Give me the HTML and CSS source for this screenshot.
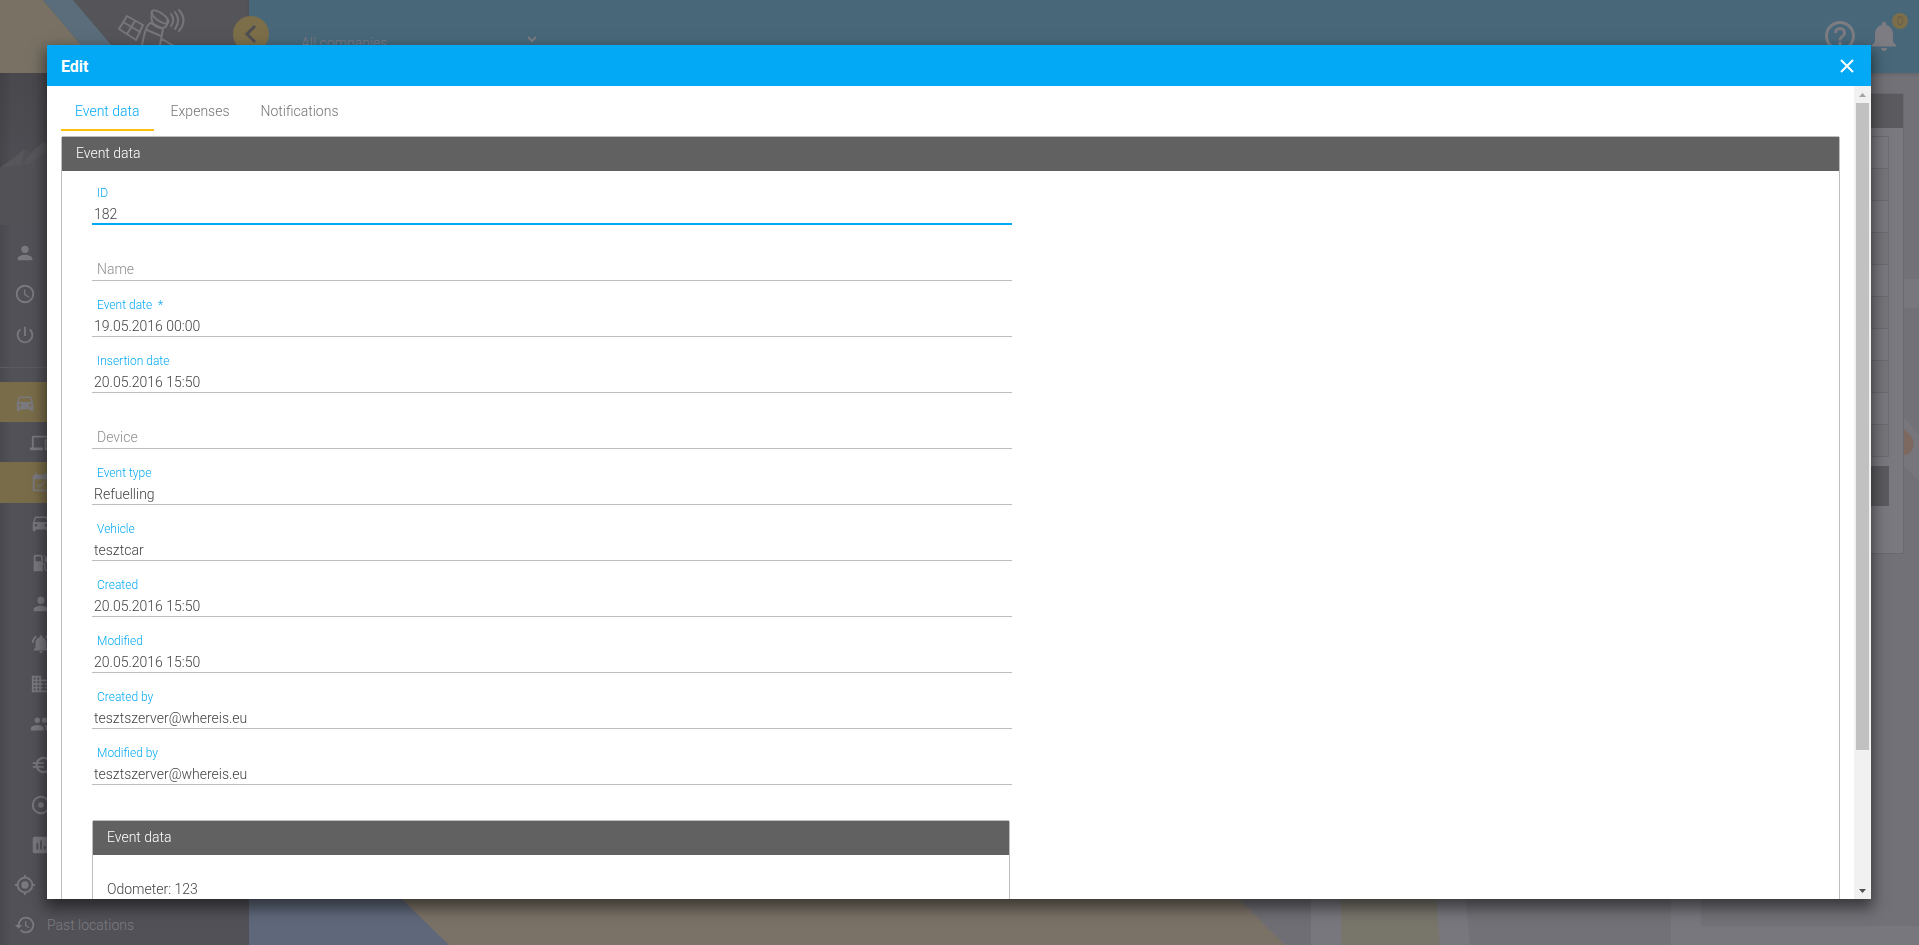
FILE: index.html
```
<!DOCTYPE html>
<html lang="en">

<head>
    <meta charset="UTF-8">
    <meta name="viewport" content="width=device-width, initial-scale=1.0">
    <title>Edit event</title>
    <link rel="stylesheet" href="styles.css">
</head>

<body>
    <div class="app">
        <aside class="sidebar">
            <div class="brand">
                <svg class="brand-art" viewBox="0 0 249 73" aria-hidden="true">
                    <rect width="249" height="73" fill="#555459" />
                    <path d="M0 0H43L105 73H0z" fill="#787164" />
                    <path d="M43 0H73L135 73H105z" fill="#5b6d7a" />
                    <g fill="none" stroke="#77767b" stroke-width="2" stroke-linejoin="round" stroke-linecap="round">
                        <path d="M127 16L143 25L136 40L119 29zM135 21L127 34M123 22L140 32" />
                        <ellipse cx="160" cy="17" rx="10" ry="4" transform="rotate(35 160 17)" />
                        <path d="M152 13C150 22 154 28 163 28C167 27 168 24 167 21" />
                        <path d="M151 23C147 24 145 30 142 45M151 23L163 29L160 45M147 30L161 36M162 39L174 46" />
                        <path d="M171 14C174 18 174 22 171 26M175 12C179 17 179 23 175 29M179 10C185 17 185 24 179 31" />
                    </g>
                </svg>
            </div>
            <div class="profile">
                <svg class="mountains" viewBox="0 0 249 90" aria-hidden="true">
                    <path d="M0 27L25 8L31 12L43 1L62 16L90 0L125 24L160 6L200 34L249 14V84H0z" fill="#525156" />
                    <path d="M0 27L25 8L20 27L31 12L43 1L62 16L46 11L31 22z" fill="#57565b" />
                </svg>
            </div>
            <nav class="user-menu">
                <a href="#" aria-label="Profile"><svg class="icon" viewBox="0 0 24 24"><path d="M12 12a4 4 0 1 0 0-8 4 4 0 0 0 0 8zm0 2c-2.670 0-8 1.340-8 4v2h16v-2c0-2.660-5.330-4-8-4z" /></svg></a>
                <a href="#" aria-label="Activity"><svg class="icon" viewBox="0 0 24 24"><path d="M11.990 2C6.470 2 2 6.480 2 12s4.470 10 9.990 10C17.520 22 22 17.520 22 12S17.520 2 11.990 2zM12 20a8 8 0 1 1 0-16 8 8 0 0 1 0 16zm.5-13H11v6l5.250 3.150.75-1.230-4.500-2.670z" /></svg></a>
                <a href="#" aria-label="Log out"><svg class="icon" viewBox="0 0 24 24"><path d="M13 3h-2v10h2zm4.830 2.170l-1.420 1.420A6.920 6.920 0 0 1 19 12a7 7 0 1 1-11.420-5.420L6.170 5.170A8.930 8.930 0 0 0 3 12a9 9 0 0 0 18 0c0-2.740-1.230-5.180-3.170-6.830z" /></svg></a>
            </nav>
            <nav class="main-menu">
                <a href="#" class="active" aria-label="Fleet"><svg class="icon" viewBox="0 0 24 24"><path d="M18.920 6c-.2-.58-.76-1-1.420-1h-11c-.66 0-1.210.42-1.420 1L3 12v8c0 .55.45 1 1 1h1c.55 0 1-.45 1-1v-1h12v1c0 .55.45 1 1 1h1c.55 0 1-.45 1-1v-8zM6.500 16a1.500 1.500 0 1 1 0-3 1.500 1.500 0 0 1 0 3zm11 0a1.500 1.500 0 1 1 0-3 1.500 1.500 0 0 1 0 3zM5 11l1.500-4.500h11L19 11z" /></svg></a>
                <a href="#" class="sub" aria-label="Devices"><svg class="icon" viewBox="0 0 24 24"><path d="M4 6h18V4H4c-1.100 0-2 .9-2 2v11H0v3h14v-3H4zm19 2h-6c-.55 0-1 .45-1 1v10c0 .55.45 1 1 1h6c.55 0 1-.45 1-1V9c0-.55-.45-1-1-1zm-1 9h-4v-7h4z" /></svg></a>
                <a href="#" class="sub active" aria-label="Events"><svg class="icon" viewBox="0 0 24 24"><path d="M16.530 11.060L15.470 10l-4.880 4.880-2.120-2.120-1.060 1.060L10.590 17zM19 3h-1V1h-2v2H8V1H6v2H5a2 2 0 0 0-2 2v14a2 2 0 0 0 2 2h14a2 2 0 0 0 2-2V5a2 2 0 0 0-2-2zm0 16H5V8h14z" /></svg></a>
                <a href="#" class="sub" aria-label="Vehicles"><svg class="icon" viewBox="0 0 24 24"><path d="M18.920 6c-.2-.58-.76-1-1.420-1h-11c-.66 0-1.210.42-1.420 1L3 12v8c0 .55.45 1 1 1h1c.55 0 1-.45 1-1v-1h12v1c0 .55.45 1 1 1h1c.55 0 1-.45 1-1v-8zM6.500 16a1.500 1.500 0 1 1 0-3 1.500 1.500 0 0 1 0 3zm11 0a1.500 1.500 0 1 1 0-3 1.500 1.500 0 0 1 0 3zM5 11l1.500-4.500h11L19 11z" /></svg></a>
                <a href="#" class="sub" aria-label="Fuel"><svg class="icon" viewBox="0 0 24 24"><path d="M19.770 7.230l-3.710-3.730L15 4.560l2.110 2.110A2.500 2.500 0 0 0 19 11.300v7.200a1 1 0 0 1-2 0V14a2 2 0 0 0-2-2h-1V5a2 2 0 0 0-2-2H6a2 2 0 0 0-2 2v16h10v-7.500h1.500v5a2.500 2.500 0 0 0 5 0V9c0-.69-.28-1.320-.73-1.770zM12 10H6V5h6z" /></svg></a>
                <a href="#" class="sub" aria-label="Drivers"><svg class="icon" viewBox="0 0 24 24"><path d="M12 12a4 4 0 1 0 0-8 4 4 0 0 0 0 8zm0 2c-2.670 0-8 1.340-8 4v2h16v-2c0-2.660-5.330-4-8-4z" /></svg></a>
                <a href="#" class="sub" aria-label="Alerts"><svg class="icon" viewBox="0 0 24 24"><path d="M7.580 4.080L6.150 2.650C3.750 4.480 2.170 7.300 2.030 10.500h2c.15-2.650 1.510-4.970 3.550-6.420zm12.390 6.420h2c-.15-3.200-1.730-6.020-4.120-7.850l-1.420 1.430c2.020 1.450 3.390 3.770 3.540 6.420zM18 11c0-3.070-1.640-5.640-4.500-6.320V4a1.500 1.500 0 0 0-3 0v.68C7.630 5.360 6 7.920 6 11v5l-2 2v1h16v-1l-2-2zm-6 11a2 2 0 0 0 2-2h-4a2 2 0 0 0 2 2z" /></svg></a>
                <a href="#" class="sub" aria-label="Companies"><svg class="icon" viewBox="0 0 24 24"><path d="M12 7V3H2v18h20V7zM6 19H4v-2h2zm0-4H4v-2h2zm0-4H4V9h2zm0-4H4V5h2zm4 12H8v-2h2zm0-4H8v-2h2zm0-4H8V9h2zm0-4H8V5h2zm10 12h-8v-2h2v-2h-2v-2h2v-2h-2V9h8zm-2-8h-2v2h2zm0 4h-2v2h2z" /></svg></a>
                <a href="#" class="sub" aria-label="Users"><svg class="icon" viewBox="0 0 24 24"><path d="M16 11a3 3 0 1 0 0-6 3 3 0 0 0 0 6zm-8 0a3 3 0 1 0 0-6 3 3 0 0 0 0 6zm0 2c-2.330 0-7 1.170-7 3.500V19h14v-2.500C15 14.170 10.330 13 8 13zm8 0c-.29 0-.62.02-.97.05 1.160.84 1.970 1.970 1.970 3.450V19h6v-2.500c0-2.330-4.670-3.500-7-3.500z" /></svg></a>
                <a href="#" class="sub" aria-label="Expenses"><svg class="icon" viewBox="0 0 24 24"><path d="M15 18.500A6.480 6.480 0 0 1 9.240 15H15v-2H8.580a6.600 6.600 0 0 1 0-2H15V9H9.240A6.490 6.490 0 0 1 15 5.500c1.610 0 3.090.59 4.230 1.570L21 5.300A8.960 8.960 0 0 0 15 3a9 9 0 0 0-8.480 6H3v2h3.060a8.300 8.300 0 0 0 0 2H3v2h3.520A9 9 0 0 0 21 18.700l-1.780-1.770A6.400 6.400 0 0 1 15 18.500z" /></svg></a>
                <a href="#" class="sub" aria-label="Tracking"><svg class="icon" viewBox="0 0 24 24"><path d="M12 2a10 10 0 1 0 0 20 10 10 0 0 0 0-20zm0 18a8 8 0 1 1 0-16 8 8 0 0 1 0 16zm3-8a3 3 0 1 1-6 0 3 3 0 0 1 6 0z" /></svg></a>
                <a href="#" class="sub" aria-label="Reports"><svg class="icon" viewBox="0 0 24 24"><path d="M19 3H5a2 2 0 0 0-2 2v14a2 2 0 0 0 2 2h14a2 2 0 0 0 2-2V5a2 2 0 0 0-2-2zM9 17H7v-7h2zm4 0h-2V7h2zm4 0h-2v-4h2z" /></svg></a>
                <a href="#" aria-label="Current location"><svg class="icon" viewBox="0 0 24 24"><path d="M12 8a4 4 0 1 0 0 8 4 4 0 0 0 0-8zm8.940 3A8.990 8.990 0 0 0 13 3.060V1h-2v2.060A8.990 8.990 0 0 0 3.060 11H1v2h2.060A8.990 8.990 0 0 0 11 20.940V23h2v-2.060A8.990 8.990 0 0 0 20.940 13H23v-2zM12 19a7 7 0 1 1 0-14 7 7 0 0 1 0 14z" /></svg></a>
                <a href="#"><svg class="icon" viewBox="0 0 24 24"><path d="M13 3a9 9 0 0 0-9 9H1l3.890 3.890.07.14L9 12H6a7 7 0 1 1 2.060 4.940l-1.420 1.420A9 9 0 1 0 13 3zm-1 5v5l4.280 2.540.72-1.210-3.500-2.080V8z" /></svg>Past locations</a>
            </nav>
        </aside>
        <div class="page">
            <header class="topbar">
                <button class="collapse" aria-label="Collapse menu"><svg viewBox="0 0 36 36"><path d="M22 10L14 18L22 26" fill="none" stroke="#4f4e53" stroke-width="3" /></svg></button>
                <button class="company">All companies
                    <svg viewBox="0 0 12 8"><path d="M2 2L6 6L10 2" fill="none" stroke="#7d7c82" stroke-width="2" /></svg>
                </button>
                <div class="actions">
                    <button aria-label="Help"><svg viewBox="0 0 24 24"><path d="M11 18h2v-2h-2zm1-16a10 10 0 1 0 0 20 10 10 0 0 0 0-20zm0 18a8 8 0 1 1 0-16 8 8 0 0 1 0 16zm0-14a4 4 0 0 0-4 4h2a2 2 0 0 1 4 0c0 2-3 1.750-3 5h2c0-2.250 3-2.500 3-5a4 4 0 0 0-4-4z" /></svg></button>
                    <button aria-label="Notifications"><svg viewBox="0 0 24 24"><path d="M12 22a2 2 0 0 0 2-2h-4a2 2 0 0 0 2 2zm6-6v-5c0-3.070-1.640-5.640-4.500-6.320V4a1.500 1.500 0 0 0-3 0v.68C7.630 5.360 6 7.920 6 11v5l-2 2v1h16v-1z" /></svg><span class="badge">0</span></button>
                </div>
            </header>
            <main class="content">
                <svg class="wallpaper" viewBox="0 0 1670 872" preserveAspectRatio="none" aria-hidden="true">
                    <rect width="1670" height="872" fill="#727177" />
                    <path d="M0 0H991V872H0z" fill="#5f687a" />
                    <path d="M85 760H925L1036 872H200z" fill="#7b7267" />
                    <path d="M925 760H1062V872H1036z" fill="#6f6e74" />
                    <path d="M1062 700H1205L1221 872H1062zM1422 700H1452V853H1670V872H1422z" fill="#78777d" />
                    <path d="M1092 700H1176L1191 872H1092z" fill="#78756b" />
                    <path d="M1640 206H1670V235H1640z" fill="#78777d" />
                    <path d="M1650 338L1670 362V408L1650 388z" fill="#77767c" />
                    <path d="M1650 351L1662 363Q1668 372 1661 380Q1655 384 1650 381z" fill="#7d695f" />
                </svg>
                <section class="card">
                    <div class="card-header"></div>
                    <div class="card-body">
                        <table class="grid">
                            <tbody>
                                <tr><td></td></tr>
                                <tr><td></td></tr>
                                <tr><td></td></tr>
                                <tr><td></td></tr>
                                <tr><td></td></tr>
                                <tr><td></td></tr>
                                <tr><td></td></tr>
                                <tr><td></td></tr>
                                <tr><td></td></tr>
                                <tr><td></td></tr>
                            </tbody>
                        </table>
                        <div class="pager"></div>
                    </div>
                </section>
            </main>
        </div>
    </div>

    <div class="dialog-layer">
        <div class="dialog" role="dialog" aria-labelledby="dialog-title">
            <div class="dialog-header">
                <h2 id="dialog-title">Edit</h2>
                <button class="close" aria-label="Close"><svg viewBox="0 0 14 14"><path d="M1 1L13 13M13 1L1 13" fill="none" stroke="#fff" stroke-width="2" /></svg></button>
            </div>
            <div class="dialog-main">
                <div class="dialog-body">
                    <div class="tabs">
                        <button class="tab-item active">Event data</button>
                        <button class="tab-item">Expenses</button>
                        <button class="tab-item">Notifications</button>
                    </div>
                    <section class="panel">
                        <h3 class="panel-header">Event data</h3>
                        <form class="panel-form">
                            <div class="field focused">
                                <label for="id">ID</label>
                                <input id="id" type="text" value="182">
                            </div>
                            <div class="field empty">
                                <label for="name">Name</label>
                                <input id="name" type="text">
                            </div>
                            <div class="field">
                                <label for="event-date">Event date&nbsp; *</label>
                                <input id="event-date" type="text" value="19.05.2016 00:00">
                            </div>
                            <div class="field">
                                <label for="insertion-date">Insertion date</label>
                                <input id="insertion-date" type="text" value="20.05.2016 15:50">
                            </div>
                            <div class="field empty">
                                <label for="device">Device</label>
                                <input id="device" type="text">
                            </div>
                            <div class="field">
                                <label for="event-type">Event type</label>
                                <input id="event-type" type="text" value="Refuelling">
                            </div>
                            <div class="field">
                                <label for="vehicle">Vehicle</label>
                                <input id="vehicle" type="text" value="tesztcar">
                            </div>
                            <div class="field">
                                <label for="created">Created</label>
                                <input id="created" type="text" value="20.05.2016 15:50">
                            </div>
                            <div class="field">
                                <label for="modified">Modified</label>
                                <input id="modified" type="text" value="20.05.2016 15:50">
                            </div>
                            <div class="field">
                                <label for="created-by">Created by</label>
                                <input id="created-by" type="text" value="tesztszerver@whereis.eu">
                            </div>
                            <div class="field">
                                <label for="modified-by">Modified by</label>
                                <input id="modified-by" type="text" value="tesztszerver@whereis.eu">
                            </div>
                            <section class="panel nested">
                                <h3 class="panel-header">Event data</h3>
                                <p class="panel-text">Odometer: 123</p>
                            </section>
                        </form>
                    </section>
                </div>
                <div class="scrollbar" aria-hidden="true">
                    <svg viewBox="0 0 17 17"><path d="M5 11H12L8.500 7z" fill="#a3a3a3" /></svg>
                    <div class="track"><div class="thumb"></div></div>
                    <svg viewBox="0 0 17 17"><path d="M5 7H12L8.500 11z" fill="#505050" /></svg>
                </div>
            </div>
        </div>
    </div>
</body>

</html>
```
FILE: styles.css
```
* {
    box-sizing: border-box;
}

body {
    margin: 0;
    font-family: Roboto, "Liberation Sans", sans-serif;
    font-size: 14px;
    font-weight: 300;
    line-height: 20px;
    overflow: hidden;
}

button {
    font: inherit;
    color: inherit;
    background: none;
    border: 0;
    padding: 0;
    cursor: pointer;
}

svg {
    display: block;
}

.app {
    display: flex;
    min-height: 100vh;
    background: #727177;
}

/* sidebar */
.sidebar {
    display: flex;
    flex-direction: column;
    flex: none;
    width: 249px;
    color: #7d7c82;
    background: linear-gradient(90deg, rgba(0, 0, 0, .1), transparent 12px), linear-gradient(#49484d 73px, #525157 220px);
}

.brand {
    height: 73px;
}

.brand-art {
    width: 100%;
}

.profile {
    padding-top: 68px;
    height: 159px;
}

.sidebar a {
    display: flex;
    align-items: center;
    padding-left: 14px;
    color: inherit;
    text-decoration: none;
}

.icon {
    width: 22px;
    height: 22px;
    margin-right: 11px;
    fill: #7a797f;
}

.user-menu {
    display: grid;
    grid-auto-rows: 41px;
    padding-bottom: 12px;
    border-bottom: 1px solid #5c5b60;
    margin-bottom: 14px;
}

.main-menu {
    display: grid;
    grid-auto-rows: 1fr;
    flex: 1;
}

.main-menu a {
    padding-top: 1px;
}

.sidebar a.sub {
    padding-left: 30px;
}

.sidebar a.active {
    background: #796c49;
}

/* page */
.page {
    display: flex;
    flex-direction: column;
    flex: 1;
}

.topbar {
    position: relative;
    display: flex;
    height: 73px;
    padding-right: 17px;
    color: #7d7c82;
    background: #48687a;
    box-shadow: 0 1px 4px rgba(0, 0, 0, .15);
    z-index: 1;
}

.collapse {
    width: 36px;
    height: 36px;
    margin: 16px 0 0 -16px;
    border-radius: 50%;
    background: #7c6e49;
}

.company {
    display: flex;
    justify-content: space-between;
    width: 237px;
    height: 20px;
    margin: 33px 0 0 32px;
}

.company svg {
    width: 12px;
    height: 8px;
    margin-top: 2px;
}

.actions {
    display: flex;
    gap: 8px;
    margin: 18px 0 0 auto;
}

.actions button {
    position: relative;
    width: 36px;
    height: 36px;
}

.actions svg {
    fill: #7d7c82;
}

.badge {
    position: absolute;
    top: -5px;
    right: -6px;
    width: 16px;
    height: 16px;
    border-radius: 50%;
    font-size: 12px;
    line-height: 16px;
    color: #5f5a50;
    background: #7c6e49;
}

.content {
    position: relative;
    flex: 1;
    padding: 20px 15px;
}

.wallpaper {
    position: absolute;
    inset: 0;
    width: 100%;
    height: 100%;
}

.card {
    position: relative;
    border: 1px solid #6a696e;
    border-radius: 2px;
    background: #7a797f;
}

.card-header {
    height: 34px;
    background: #5b5a5e;
}

.card-body {
    padding: 8px 14px 47px;
}

.grid {
    width: 100%;
    border-collapse: collapse;
}

.grid td {
    height: 32px;
    padding: 0;
    border: 1px solid #6c6b70;
}

.grid tr:nth-child(even) {
    background: #76757a;
}

.pager {
    height: 40px;
    margin-top: 9px;
    background: #5b5a5e;
}

/* dialog */
.dialog-layer {
    position: fixed;
    inset: 0;
    display: flex;
    padding: 45px 48px 46px 47px;
    z-index: 10;
}

.dialog {
    display: flex;
    flex-direction: column;
    flex: 1;
    color: #424242;
    background: #fff;
    box-shadow: 0 7px 14px 2px rgba(0, 0, 0, .5);
}

.dialog-header {
    display: flex;
    align-items: center;
    justify-content: space-between;
    flex: none;
    height: 41px;
    padding: 0 17px 0 14px;
    color: #fff;
    background: #03a9f4;
}

.dialog-header h2 {
    margin: 0;
    padding-top: 2px;
    font-size: 16px;
    font-weight: 700;
}

.close svg {
    width: 14px;
    height: 14px;
}

.dialog-main {
    display: flex;
    flex: 1;
    min-height: 0;
}

.dialog-body {
    flex: 1;
    padding: 0 14px;
    overflow: hidden;
}

.tabs {
    display: flex;
    gap: 3px;
    height: 45px;
    margin-bottom: 5px;
}

.tab-item {
    padding: 6px 14px 0;
    border-bottom: 2px solid transparent;
    color: #757575;
}

.tab-item.active {
    color: #03a9f4;
    border-color: #ffc107;
}

.panel {
    border: 1px solid #bdbdbd;
    border-radius: 2px;
}

.panel-header {
    margin: 0;
    padding: 6px 14px 8px;
    font-size: 14px;
    font-weight: 300;
    color: #fff;
    background: #616161;
}

.panel-form {
    display: grid;
    gap: 16px;
    width: calc(50% + 61px);
    padding: 14px 0 14px 30px;
}

.field {
    display: grid;
    grid-template-rows: 16px 21px;
    gap: 3px;
}

.field label {
    padding-left: 5px;
    font-size: 12px;
    line-height: 16px;
    color: #03a9f4;
}

.field input {
    grid-row: 2;
    width: 100%;
    height: 21px;
    padding: 0 2px;
    border: 0;
    border-bottom: 1px solid #bdbdbd;
    font: inherit;
    color: inherit;
    background: none;
    outline: none;
}

.field.focused input {
    border-bottom: 2px solid #03a9f4;
}

.field.empty label,
.field.empty input {
    grid-area: 2 / 1;
}

.field.empty label {
    font-size: 14px;
    line-height: 18px;
    color: #8e8e8e;
}

.nested {
    margin: 19px 2px 0 0;
}

.nested .panel-text {
    margin: 0;
    padding: 24px 14px;
}

/* scrollbar */
.scrollbar {
    display: flex;
    flex-direction: column;
    flex: none;
    width: 17px;
    background: #f1f1f1;
}

.scrollbar svg {
    width: 17px;
    height: 17px;
}

.track {
    flex: 1;
    padding: 0 2px;
}

.thumb {
    height: 83%;
    background: #c1c1c1;
}
```
